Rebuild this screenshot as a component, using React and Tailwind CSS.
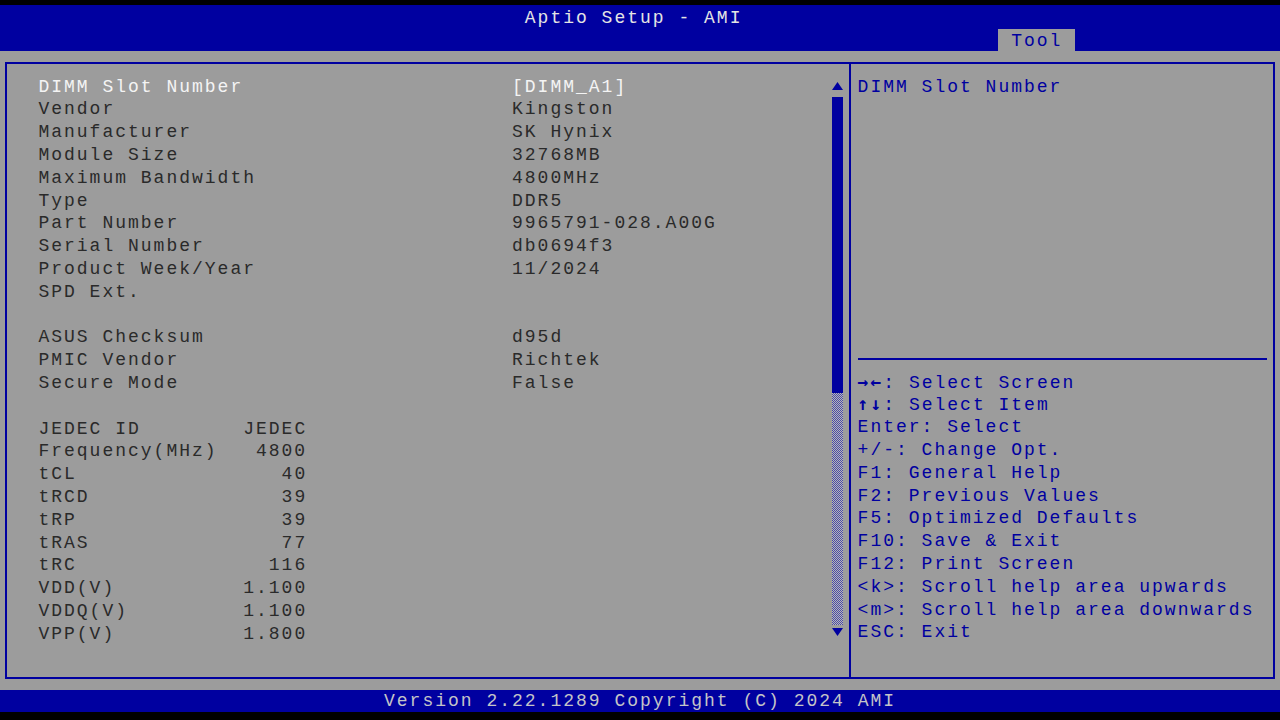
import React from "react";

const info = [
  ["DIMM Slot Number", "[DIMM_A1]", true],
  ["Vendor", "Kingston"],
  ["Manufacturer", "SK Hynix"],
  ["Module Size", "32768MB"],
  ["Maximum Bandwidth", "4800MHz"],
  ["Type", "DDR5"],
  ["Part Number", "9965791-028.A00G"],
  ["Serial Number", "db0694f3"],
  ["Product Week/Year", "11/2024"],
  ["SPD Ext.", ""],
  ["", ""],
  ["ASUS Checksum", "d95d"],
  ["PMIC Vendor", "Richtek"],
  ["Secure Mode", "False"],
  ["", ""],
];

const jedec = [
  ["JEDEC ID", "JEDEC"],
  ["Frequency(MHz)", "4800"],
  ["tCL", "40"],
  ["tRCD", "39"],
  ["tRP", "39"],
  ["tRAS", "77"],
  ["tRC", "116"],
  ["VDD(V)", "1.100"],
  ["VDDQ(V)", "1.100"],
  ["VPP(V)", "1.800"],
];

const help = [
  ["\u2192\u2190", ": Select Screen"],
  ["\u2191\u2193", ": Select Item"],
  ["", "Enter: Select"],
  ["", "+/-: Change Opt."],
  ["", "F1: General Help"],
  ["", "F2: Previous Values"],
  ["", "F5: Optimized Defaults"],
  ["", "F10: Save & Exit"],
  ["", "F12: Print Screen"],
  ["", "<k>: Scroll help area upwards"],
  ["", "<m>: Scroll help area downwards"],
  ["", "ESC: Exit"],
];

export default function App() {
  return (
    <div className="w-[1280px] h-[720px] bg-black flex flex-col overflow-hidden font-['Liberation_Mono','DejaVu_Sans_Mono',monospace] text-[18px] tracking-[2px]">
      <div className="h-[5px] shrink-0" />
      <div className="h-[46px] shrink-0 bg-[#0000a0] flex flex-col">
        <div className="mt-[2px] h-[22px] leading-[22px] pl-[524.8px] text-[#e4e4e4] whitespace-pre">
          Aptio Setup - AMI
        </div>
        <div className="h-[22px] flex">
          <div className="ml-[998.4px] w-[76.8px] bg-[#9c9c9c] text-[#0000a0] leading-[24px] pl-[12.8px]">
            Tool
          </div>
        </div>
      </div>

      <div className="h-[639px] shrink-0 bg-[#9c9c9c] pt-[11px] pb-[11px] pl-[5px] pr-[5px] flex">
        <div className="flex-1 border-2 border-[#0000a0] flex">
          {/* Left panel */}
          <div className="w-[844px] shrink-0 border-r-2 border-[#0000a0] flex">
            <div className="flex-1 pl-[31.4px] pt-[11.6px] flex flex-col text-[#2a2a2a]">
              {info.map(([l, v, sel], i) => (
                <div key={i} className="h-[22.8px] leading-[22.8px] flex whitespace-pre">
                  <div className={"w-[473.6px] shrink-0 " + (sel ? "text-[#f4f4f4]" : "")}>{l}</div>
                  <div className={sel ? "text-[#f4f4f4]" : ""}>{v}</div>
                </div>
              ))}
              {jedec.map(([l, v], i) => (
                <div key={"j" + i} className="h-[22.8px] leading-[22.8px] w-[268.8px] flex justify-between whitespace-pre">
                  <div>{l}</div>
                  <div className="text-right">{v}</div>
                </div>
              ))}
            </div>
            {/* Scrollbar */}
            <div className="w-[11px] mr-[6px] pt-[18px] flex flex-col">
              <svg width="11" height="8" viewBox="0 0 11 8" className="block">
                <polygon points="5.5,0 11,8 0,8" fill="#0000a0" />
              </svg>
              <div className="mt-[7px] h-[296px] bg-[#0000a0]" />
              <div className="h-[232px] bg-[conic-gradient(#4a4aa8_25%,#b8b8b8_0_50%,#4a4aa8_0_75%,#b8b8b8_0)] bg-[length:2px_2px]" />
              <svg width="11" height="8" viewBox="0 0 11 8" className="block mt-[3px]">
                <polygon points="0,0 11,0 5.5,8" fill="#0000a0" />
              </svg>
            </div>
          </div>

          {/* Right panel */}
          <div className="flex-1 pl-[6.6px] pr-[6px] pt-[11.6px] flex flex-col text-[#0000a0]">
            <div className="h-[22.8px] leading-[22.8px] whitespace-pre">DIMM Slot Number</div>
            <div className="h-[259.6px]" />
            <div className="h-[2px] bg-[#0000a0]" />
            <div className="h-[10.6px]" />
            {help.map(([a, t], i) => (
              <div key={i} className="h-[22.8px] leading-[22.8px] whitespace-pre">
                {a ? <span className="font-['DejaVu_Sans_Mono',monospace] font-bold">{a}</span> : null}
                {t}
              </div>
            ))}
          </div>
        </div>
      </div>

      <div className="h-[22px] shrink-0 bg-[#0000a0] leading-[22px] pl-[384px] text-[#c4c4c8] whitespace-pre">
        Version 2.22.1289 Copyright (C) 2024 AMI
      </div>
      <div className="flex-1" />
    </div>
  );
}
